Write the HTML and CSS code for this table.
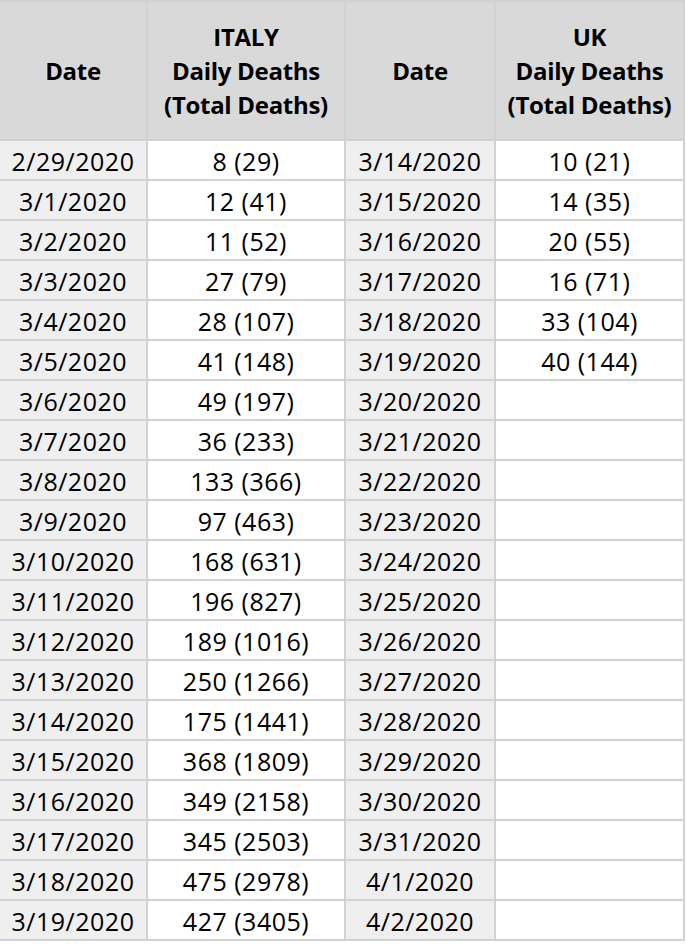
FILE: index.html
```html
<!DOCTYPE html>
<html>
<head>
<meta charset="utf-8">
<link rel="stylesheet" href="styles.css">
</head>
<body>
<div class="sheet">
  <div class="cell head">Date</div>
  <div class="cell head">ITALY<br>Daily Deaths<br>(Total Deaths)</div>
  <div class="cell head">Date</div>
  <div class="cell head">UK<br>Daily Deaths<br>(Total Deaths)</div>

  <div class="cell date">2/29/2020</div><div class="cell">8 (29)</div><div class="cell date">3/14/2020</div><div class="cell">10 (21)</div>
  <div class="cell date">3/1/2020</div><div class="cell">12 (41)</div><div class="cell date">3/15/2020</div><div class="cell">14 (35)</div>
  <div class="cell date">3/2/2020</div><div class="cell">11 (52)</div><div class="cell date">3/16/2020</div><div class="cell">20 (55)</div>
  <div class="cell date">3/3/2020</div><div class="cell">27 (79)</div><div class="cell date">3/17/2020</div><div class="cell">16 (71)</div>
  <div class="cell date">3/4/2020</div><div class="cell">28 (107)</div><div class="cell date">3/18/2020</div><div class="cell">33 (104)</div>
  <div class="cell date">3/5/2020</div><div class="cell">41 (148)</div><div class="cell date">3/19/2020</div><div class="cell">40 (144)</div>
  <div class="cell date">3/6/2020</div><div class="cell">49 (197)</div><div class="cell date">3/20/2020</div><div class="cell"></div>
  <div class="cell date">3/7/2020</div><div class="cell">36 (233)</div><div class="cell date">3/21/2020</div><div class="cell"></div>
  <div class="cell date">3/8/2020</div><div class="cell">133 (366)</div><div class="cell date">3/22/2020</div><div class="cell"></div>
  <div class="cell date">3/9/2020</div><div class="cell">97 (463)</div><div class="cell date">3/23/2020</div><div class="cell"></div>
  <div class="cell date">3/10/2020</div><div class="cell">168 (631)</div><div class="cell date">3/24/2020</div><div class="cell"></div>
  <div class="cell date">3/11/2020</div><div class="cell">196 (827)</div><div class="cell date">3/25/2020</div><div class="cell"></div>
  <div class="cell date">3/12/2020</div><div class="cell">189 (1016)</div><div class="cell date">3/26/2020</div><div class="cell"></div>
  <div class="cell date">3/13/2020</div><div class="cell">250 (1266)</div><div class="cell date">3/27/2020</div><div class="cell"></div>
  <div class="cell date">3/14/2020</div><div class="cell">175 (1441)</div><div class="cell date">3/28/2020</div><div class="cell"></div>
  <div class="cell date">3/15/2020</div><div class="cell">368 (1809)</div><div class="cell date">3/29/2020</div><div class="cell"></div>
  <div class="cell date">3/16/2020</div><div class="cell">349 (2158)</div><div class="cell date">3/30/2020</div><div class="cell"></div>
  <div class="cell date">3/17/2020</div><div class="cell">345 (2503)</div><div class="cell date">3/31/2020</div><div class="cell"></div>
  <div class="cell date">3/18/2020</div><div class="cell">475 (2978)</div><div class="cell date">4/1/2020</div><div class="cell"></div>
  <div class="cell date">3/19/2020</div><div class="cell">427 (3405)</div><div class="cell date">4/2/2020</div><div class="cell"></div>
</div>
</body>
</html>
```
FILE: styles.css
```css
html, body {
  margin: 0;
  padding: 0;
  background: #ffffff;
}
.sheet {
  width: 685px;
  box-sizing: border-box;
  display: grid;
  grid-template-columns: 146px 196px 148px 187px;
  grid-template-rows: 137px repeat(20, 38px);
  gap: 2px;
  padding: 2px 2px 2px 0;
  background: #d2d2d2;
  font-family: "Open Sans", "Noto Sans", sans-serif;
  font-size: 25px;
  color: #000;
}
.cell {
  background: #ffffff;
  display: flex;
  align-items: center;
  justify-content: center;
  text-align: center;
  padding-top: 2px;
  box-sizing: border-box;
  white-space: nowrap;
  letter-spacing: 0.5px;
}
.cell.date {
  background: #efefef;
}
.cell.head {
  background: #d9d9d9;
  font-weight: 700;
  font-size: 24px;
  line-height: 34px;
  padding-top: 0;
  letter-spacing: -0.3px;
}
```
